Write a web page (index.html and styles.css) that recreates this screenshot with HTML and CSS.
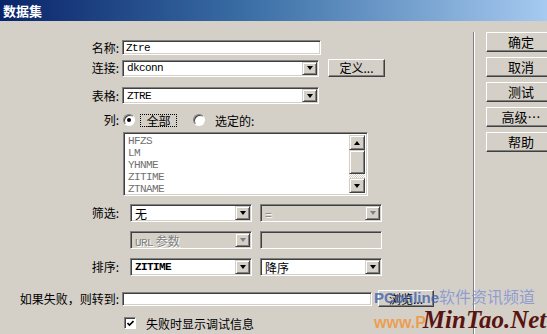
FILE: index.html
```html
<!DOCTYPE html>
<html lang="zh-CN">
<head>
    <meta charset="UTF-8">
    <title>数据集</title>
    <link rel="stylesheet" href="styles.css">
</head>
<body>
    <div class="titlebar">数据集</div>
    <div class="dialog">
        <div class="form">
            <div class="row r-name">
                <span class="label">名称:</span>
                <div class="field text w-name">Ztre</div>
            </div>
            <div class="row r-conn">
                <span class="label">连接:</span>
                <div class="field select w-wide"><span class="val mono">dkconn</span><span class="arrow"></span></div>
                <button class="btn btn-def">定义...</button>
            </div>
            <div class="row r-table">
                <span class="label">表格:</span>
                <div class="field select w-wide"><span class="val mono">ZTRE</span><span class="arrow"></span></div>
            </div>
            <div class="row r-cols">
                <span class="label">列:</span>
                <span class="radio checked"></span>
                <span class="focus">全部</span>
                <span class="radio r-two"></span>
                <span class="radio-text">选定的:</span>
            </div>
            <div class="row r-list">
                <span class="label"></span>
                <div class="listbox">
                    <div class="items">
                        <div>HFZS</div>
                        <div>LM</div>
                        <div>YHNME</div>
                        <div>ZITIME</div>
                        <div>ZTNAME</div>
                    </div>
                    <div class="scroll">
                        <span class="sb-btn"><span class="tri up"></span></span>
                        <span class="sb-thumb"></span>
                        <span class="sb-track"></span>
                        <span class="sb-btn"><span class="tri"></span></span>
                    </div>
                </div>
            </div>
            <div class="row r-half r-filter">
                <span class="label">筛选:</span>
                <div class="field select w-half"><span class="val">无</span><span class="arrow"></span></div>
                <div class="field select w-half disabled"><span class="val">=</span><span class="arrow"></span></div>
            </div>
            <div class="row r-half">
                <span class="label"></span>
                <div class="field select w-half disabled"><span class="val"><span class="mono">URL</span> 参数</span><span class="arrow"></span></div>
                <div class="field text w-half disabled"></div>
            </div>
            <div class="row r-half">
                <span class="label">排序:</span>
                <div class="field select w-half"><span class="val mono bold">ZITIME</span><span class="arrow"></span></div>
                <div class="field select w-half"><span class="val">降序</span><span class="arrow"></span></div>
            </div>
            <div class="row r-fail">
                <span class="label">如果失败，则转到:</span>
                <div class="field text w-fail"></div>
                <button class="btn btn-browse">浏览...</button>
            </div>
            <div class="row r-check">
                <span class="label"></span>
                <span class="checkbox">
                    <svg width="7" height="7" viewBox="0 0 7 7"><polyline points="0.5,3 2.5,5 6.5,1" fill="none" stroke="#000" stroke-width="1.6"/></svg>
                </span>
                <span class="check-text">失败时显示调试信息</span>
            </div>
        </div>
        <div class="side">
            <button class="btn btn-side">确定</button>
            <button class="btn btn-side">取消</button>
            <button class="btn btn-side">测试</button>
            <button class="btn btn-side">高级…</button>
            <button class="btn btn-side">帮助</button>
        </div>
    </div>
    <div class="watermark">
        <div class="wm-top"><span class="wm-pc">PConline</span>软件资讯频道</div>
        <div class="wm-bottom"><span class="wm-www">www.P</span><span class="wm-mt">MinTao.Net</span></div>
    </div>
</body>
</html>
```

FILE: styles.css
```css
body {
    margin: 0;
    background-color: #d4d0c8;
    font-family: "Noto Sans CJK SC", "Liberation Sans", sans-serif;
    font-size: 12px;
    color: #000;
    width: 547px;
    height: 334px;
    overflow: hidden;
    position: relative;
}

.titlebar {
    height: 21px;
    line-height: 21px;
    padding-left: 3px;
    background: linear-gradient(to right, #0a246a, #3a6ea5 45%, #a6caf0);
    color: #fff;
    font-weight: bold;
    font-size: 13px;
}

.dialog {
    display: flex;
    height: 313px;
}

.form {
    width: 473px;
    flex: none;
    padding-top: 19px;
    box-sizing: border-box;
}

.row {
    display: flex;
    align-items: center;
}

.label {
    width: 119px;
    flex: none;
    margin-right: 3px;
    text-align: right;
    line-height: 14px;
    white-space: nowrap;
}

.r-name { height: 15px; }
.r-conn { height: 18px; margin-top: 4px; }
.r-table { height: 17px; margin-top: 10px; }
.r-cols { height: 14px; margin-top: 9px; }
.r-list { height: 64px; margin-top: 5px; align-items: stretch; }
.r-half { height: 18px; margin-top: 9px; gap: 8px; }
.r-half.r-filter { margin-top: 8px; }
.r-fail { height: 17px; margin-top: 14px; }
.r-check { height: 12px; margin-top: 10px; }

.field {
    box-sizing: border-box;
    height: 100%;
    background-color: #fff;
    border: 1px solid;
    border-color: #808080 #fff #fff #808080;
    box-shadow: inset 1px 1px #404040, inset -1px -1px #d4d0c8;
    display: flex;
    align-items: center;
    overflow: hidden;
}

.field.disabled {
    background-color: #d4d0c8;
    color: #808080;
    text-shadow: 1px 1px #fff;
}

.text {
    padding-left: 3px;
    font-family: "Liberation Mono", monospace;
    font-size: 11px;
    letter-spacing: -0.6px;
}

.w-name { width: 199px; }
.w-wide { width: 197px; height: 17px; }
.w-half { width: 122px; }
.w-fail { width: 250px; height: 14px; }

.select .val {
    flex: 1;
    padding-left: 4px;
    white-space: nowrap;
}

.mono {
    font-family: "Liberation Mono", monospace;
    font-size: 11px;
    letter-spacing: -0.6px;
}

.bold { font-weight: bold; }

.arrow {
    width: 15px;
    height: calc(100% - 2px);
    margin-right: 1px;
    box-sizing: border-box;
    background-color: #d4d0c8;
    border: 1px solid;
    border-color: #d4d0c8 #404040 #404040 #d4d0c8;
    box-shadow: inset 1px 1px #fff, inset -1px -1px #808080;
    display: flex;
    align-items: center;
    justify-content: center;
}

.arrow::after {
    content: "";
    border-left: 3.5px solid transparent;
    border-right: 3.5px solid transparent;
    border-top: 4px solid #000;
}

.disabled .arrow::after {
    border-top-color: #808080;
}

.btn {
    box-sizing: border-box;
    padding: 0;
    font-family: "Noto Sans CJK SC", sans-serif;
    font-size: 12px;
    color: #000;
    background-color: #d4d0c8;
    border: 1px solid;
    border-color: #fff #404040 #404040 #fff;
    box-shadow: inset -1px -1px #808080;
    line-height: 14px;
}

.btn-def {
    width: 57px;
    height: 18px;
    margin-left: 9px;
}

.btn-browse {
    width: 56px;
    height: 17px;
    margin-left: 6px;
    align-self: flex-start;
}

.radio {
    width: 12px;
    height: 12px;
    box-sizing: border-box;
    border-radius: 50%;
    background-color: #fff;
    border: 1px solid;
    border-color: #808080 #fff #fff #808080;
    box-shadow: inset 1px 1px #404040;
    display: flex;
    align-items: center;
    justify-content: center;
    margin-left: 1px;
}

.radio.checked::after {
    content: "";
    width: 4px;
    height: 4px;
    border-radius: 50%;
    background-color: #000;
}

.focus {
    margin-left: 5px;
    width: 37px;
    height: 13px;
    box-sizing: border-box;
    border: 1px dotted #000;
    line-height: 11px;
    text-align: center;
}

.r-two { margin-left: 16px; }

.radio-text { margin-left: 10px; }

.listbox {
    width: 245px;
    margin-left: 1px;
    box-sizing: border-box;
    display: flex;
    background-color: #fff;
    border: 1px solid;
    border-color: #808080 #fff #fff #808080;
    box-shadow: inset 1px 1px #404040, inset -1px -1px #d4d0c8;
    padding: 2px;
}

.items {
    flex: 1;
    padding-left: 2px;
    font-family: "Liberation Mono", monospace;
    font-size: 11px;
    letter-spacing: -0.6px;
    line-height: 12px;
    color: #707070;
}

.scroll {
    width: 16px;
    display: flex;
    flex-direction: column;
}

.sb-btn,
.sb-thumb {
    box-sizing: border-box;
    background-color: #d4d0c8;
    border: 1px solid;
    border-color: #d4d0c8 #404040 #404040 #d4d0c8;
    box-shadow: inset 1px 1px #fff, inset -1px -1px #808080;
}

.sb-btn {
    height: 15px;
    display: flex;
    align-items: center;
    justify-content: center;
}

.sb-thumb { height: 24px; }

.sb-track {
    flex: 1;
    background-image: repeating-conic-gradient(#fff 0 25%, #d4d0c8 0 50%);
    background-size: 2px 2px;
}

.tri {
    border-left: 3.5px solid transparent;
    border-right: 3.5px solid transparent;
    border-top: 4px solid #000;
}

.tri.up {
    border-top: none;
    border-bottom: 4px solid #000;
}

.checkbox {
    width: 12px;
    height: 12px;
    box-sizing: border-box;
    margin-left: 2px;
    background-color: #fff;
    border: 1px solid;
    border-color: #808080 #fff #fff #808080;
    box-shadow: inset 1px 1px #404040;
    display: flex;
    align-items: center;
    justify-content: center;
}

.check-text { margin-left: 10px; }

.side {
    margin-top: 11px;
    padding-left: 12px;
    border-left: 1px solid #808080;
    box-shadow: inset 1px 0 #fff;
    display: flex;
    flex-direction: column;
    gap: 5px;
}

.btn-side {
    width: 70px;
    height: 20px;
    font-size: 13px;
}

.watermark {
    position: absolute;
    left: 374px;
    top: 286px;
    pointer-events: none;
}

.wm-top {
    font-size: 16px;
    line-height: 20px;
    color: rgba(120, 140, 210, 0.75);
    white-space: nowrap;
}

.wm-pc {
    font-family: "Liberation Sans", sans-serif;
    font-weight: bold;
    font-size: 15px;
    color: rgba(60, 95, 175, 0.8);
}

.wm-bottom {
    white-space: nowrap;
    line-height: 24px;
}

.wm-www {
    font-family: "Liberation Sans", sans-serif;
    font-weight: bold;
    font-size: 16px;
    color: rgba(240, 150, 60, 0.85);
}

.wm-mt {
    font-family: "Liberation Serif", serif;
    font-style: italic;
    font-weight: bold;
    font-size: 25px;
    color: #5a1410;
    margin-left: -3px;
}
```
